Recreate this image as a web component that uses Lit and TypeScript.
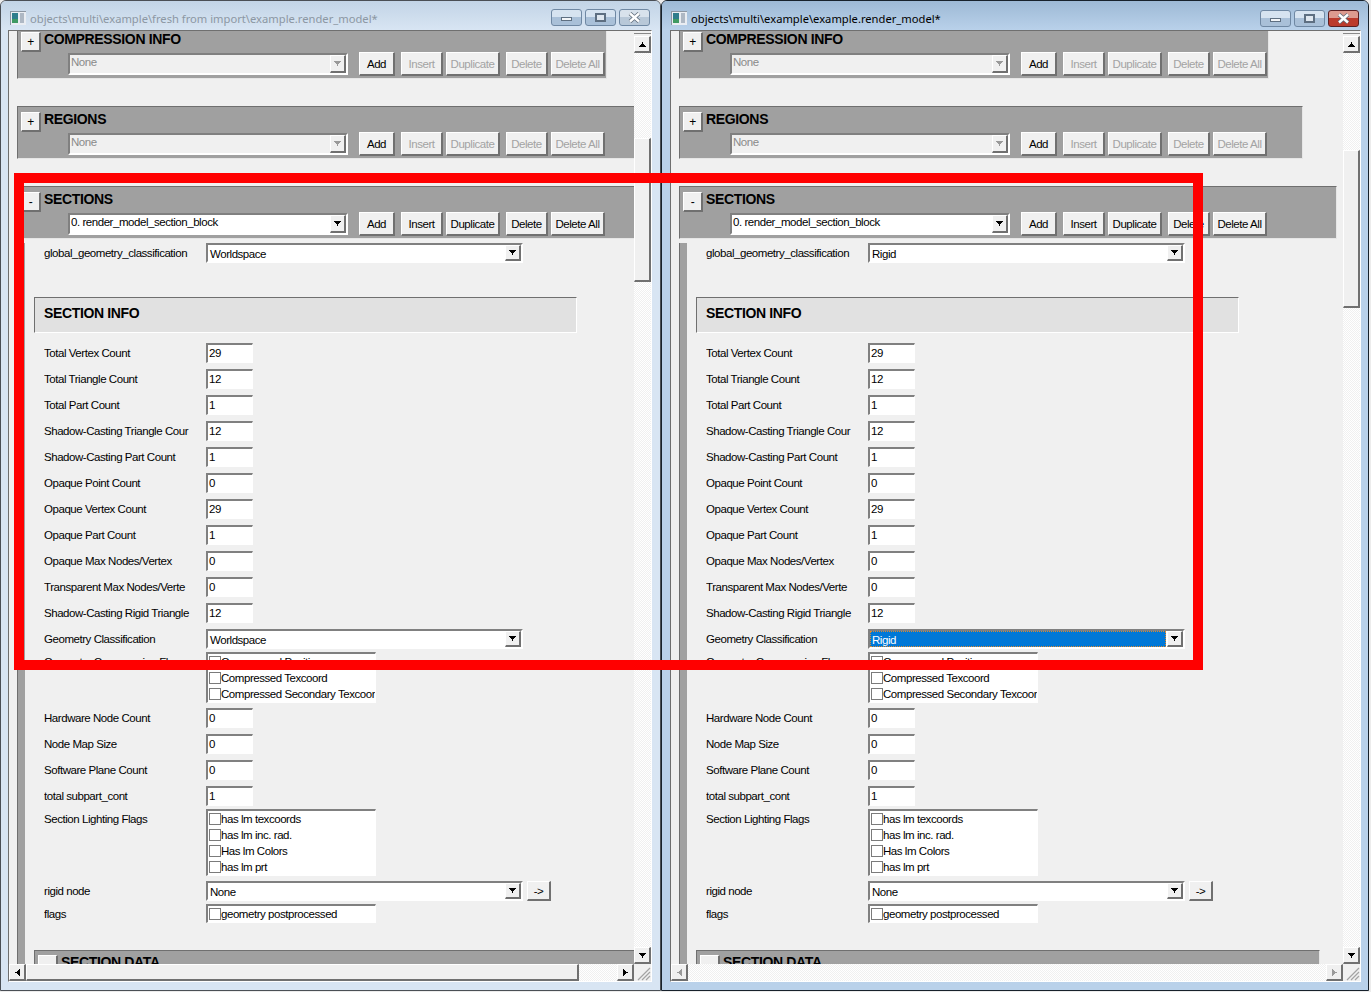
import { LitElement, css, html, svg } from 'lit'
import { customElement, property } from 'lit/decorators.js'
import { classMap } from 'lit/directives/class-map.js'

// pixel arrow, points down, the css classes turn it
const arrow = (dir = 'down', off = false) => html`
   <svg class="arrow ${dir} ${off ? 'off' : ''}" width="7" height="5" viewBox="0 0 7 5" shape-rendering="crispEdges">
      <path d="M0 0h7v1h-1v1h-1v1h-1v2h-1v-2h-1v-1h-1v-1h-1z"></path>
   </svg>`

const grip = svg`
   <path d="M16 4L4 16M16 8L8 16M16 12L12 16" stroke="#a3a3a3" stroke-width="1.2" fill="none"></path>`

const SECTION_ROWS_A: [string, string][] = [
   ['Total Vertex Count', '29'],
   ['Total Triangle Count', '12'],
   ['Total Part Count', '1'],
   ['Shadow-Casting Triangle Cour', '12'],
   ['Shadow-Casting Part Count', '1'],
   ['Opaque Point Count', '0'],
   ['Opaque Vertex Count', '29'],
   ['Opaque Part Count', '1'],
   ['Opaque Max Nodes/Vertex', '0'],
   ['Transparent Max Nodes/Verte', '0'],
   ['Shadow-Casting Rigid Triangle', '12'],
]

const SECTION_ROWS_B: [string, string][] = [
   ['Hardware Node Count', '0'],
   ['Node Map Size', '0'],
   ['Software Plane Count', '0'],
   ['total subpart_cont', '1'],
]

@customElement('tag-window')
export class TagWindow extends LitElement {
   @property({ type: String }) heading = ''
   @property({ type: Boolean }) active = false
   @property({ type: String }) geometry = 'Worldspace'

   panel(name: string, sign: string, value: string, enabled: boolean, width: string) {
      const cls = enabled ? '' : 'off'
      return html`
         <div class="panel ${width}">
            <div class="panel-top">
               <span class="btn sign">${sign}</span>
               <span class="panel-name">${name}</span>
            </div>
            <div class="panel-tools">
               <div class="combo ${cls}">
                  <span class="combo-text">${value}</span>
                  <span class="btn drop">${arrow('down', !enabled)}</span>
               </div>
               <span class="btn tool add">Add</span>
               <span class="btn tool w42 gap6 ${cls}">Insert</span>
               <span class="btn tool w54 gap3 ${cls}">Duplicate</span>
               <span class="btn tool w42 gap6 ${cls}">Delete</span>
               <span class="btn tool w54 gap3 ${cls}">Delete All</span>
            </div>
         </div>`
   }

   select(value: string, picked = false) {
      return html`
         <div class="select">
            <span class=${classMap({ 'select-text': true, picked })}>${value}</span>
            <span class="btn drop">${arrow()}</span>
         </div>`
   }

   flagList(items: string[]) {
      return html`
         <div class="list">
            ${items.map(item => html`<div class="item"><i class="check"></i><span>${item}</span></div>`)}
         </div>`
   }

   inputRow(row: [string, string]) {
      return html`
         <div class="row">
            <span class="label">${row[0]}</span>
            <span class="input">${row[1]}</span>
         </div>`
   }

   render() {
      return html`
         <div class=${classMap({ win: true, active: this.active })}>
            <div class="titlebar">
               <svg class="icon" width="16" height="14" viewBox="0 0 16 14" shape-rendering="crispEdges">
                  <rect x="0" y="0" width="16" height="14" fill="#e9edf2" stroke="#8d97a3"></rect>
                  <rect x="2" y="2" width="6" height="10" fill="#2f7d8c"></rect>
                  <rect x="2" y="8" width="6" height="4" fill="#3f9a63"></rect>
                  <rect x="10" y="2" width="4" height="10" fill="#aeb8c4"></rect>
               </svg>
               <span class="heading">${this.heading}</span>
               <span class="cap min"><i></i></span>
               <span class="cap max"><i></i></span>
               <span class="cap close">
                  <svg width="13" height="11" viewBox="0 0 13 11">
                     <path d="M2 1.5L11 9.5M11 1.5L2 9.5" stroke="#5d6a78" stroke-width="4" fill="none"></path>
                     <path d="M2 1.5L11 9.5M11 1.5L2 9.5" stroke="#fff" stroke-width="2.4" fill="none"></path>
                  </svg>
               </span>
            </div>

            <div class="client">
               <div class="view">
                  <div class="content">
                     ${this.panel('COMPRESSION INFO', '+', 'None', false, 'w-small')}
                     ${this.panel('REGIONS', '+', 'None', false, 'w-mid')}
                     ${this.panel('SECTIONS', '-', '0. render_model_section_block', true, 'w-big flush')}

                     <div class="sec-body">
                        <div class="row first">
                           <span class="label">global_geometry_classification</span>
                           ${this.select(this.geometry)}
                        </div>

                        <div class="info-head">SECTION INFO</div>

                        <div class="rows">
                           ${SECTION_ROWS_A.map(row => this.inputRow(row))}
                           <div class="row">
                              <span class="label">Geometry Classification</span>
                              ${this.select(this.geometry, this.active)}
                           </div>
                           <div class="row m3">
                              <span class="label">Geometry Compression Flags</span>
                              ${this.flagList(['Compressed Position', 'Compressed Texcoord', 'Compressed Secondary Texcoor'])}
                           </div>
                           <div class="m5">${this.inputRow(SECTION_ROWS_B[0])}</div>
                           ${SECTION_ROWS_B.slice(1).map(row => this.inputRow(row))}
                           <div class="row m3">
                              <span class="label">Section Lighting Flags</span>
                              ${this.flagList(['has lm texcoords', 'has lm inc. rad.', 'Has lm Colors', 'has lm prt'])}
                           </div>
                           <div class="row m4">
                              <span class="label">rigid node</span>
                              ${this.select('None')}
                              <span class="btn jump">-&gt;</span>
                           </div>
                           <div class="row m3">
                              <span class="label">flags</span>
                              ${this.flagList(['geometry postprocessed'])}
                           </div>
                        </div>

                        <div class="panel data">
                           <div class="panel-top">
                              <span class="btn sign"></span>
                              <span class="panel-name">SECTION DATA</span>
                           </div>
                        </div>
                     </div>
                  </div>
               </div>

               <div class="vbar">
                  <span class="btn sb">${arrow('up')}</span>
                  <span class="track"><span class="btn thumb"></span></span>
                  <span class="btn sb">${arrow()}</span>
               </div>

               <div class="hbar">
                  <span class="btn sb">${arrow('left', this.active)}</span>
                  <span class="track"><span class="btn hthumb"></span></span>
                  <span class="btn sb">${arrow('right', this.active)}</span>
               </div>

               <svg class="grip" width="17" height="17" viewBox="0 0 17 17">${grip}</svg>
            </div>
         </div>`
   }

   static styles = css`
      :host {
         display: block;
         height: 100%;
      }

      .win {
         --frame: #d8e5f3;
         --title-top: #c2d4e6;
         --edge: #4a4f55;
         --track-w: 553px;
         --thumb-top: 85px;
         --thumb-h: 144px;
         box-sizing: border-box;
         height: 100%;
         display: flex;
         flex-direction: column;
         border: 1px solid var(--edge);
         border-radius: 6px 6px 0 0;
         background: var(--frame);
         font: 11.5px/16px "Liberation Sans", Arial, sans-serif;
         letter-spacing: -0.45px;
         color: #000;
      }

      .win.active {
         --frame: #b9d1ea;
         --title-top: #9db9d5;
         --edge: #17212b;
         --thumb-top: 97px;
         --thumb-h: 158px;
      }

      .titlebar {
         height: 29px;
         flex: none;
         box-sizing: border-box;
         padding: 8px 10px 0 9px;
         display: flex;
         align-items: flex-start;
         background: linear-gradient(var(--title-top), var(--frame));
         border-radius: 5px 5px 0 0;
      }

      .active .titlebar {
         padding: 9px 9px 0 9px;
      }

      .icon {
         margin: 2px 4px 0 0;
      }

      .heading {
         flex: 1;
         font: 11.2px/19px "Noto Sans", sans-serif;
         letter-spacing: 0;
         color: #8c97a3;
         white-space: nowrap;
      }

      .active .heading {
         color: #000;
      }

      .active .icon {
         margin-top: 1px;
      }

      .active .heading {
         line-height: 18px;
      }

      .cap {
         box-sizing: border-box;
         width: 31px;
         height: 17px;
         margin-left: 3px;
         border: 1px solid #6f88a3;
         border-radius: 3px;
         background: linear-gradient(#d6e3f0 0 45%, #a9c0d8 45% 100%);
         display: flex;
         align-items: center;
         justify-content: center;
      }

      .cap.min i {
         width: 11px;
         height: 4px;
         margin-top: 3px;
         box-sizing: border-box;
         background: #f2f5f8;
         border: 1px solid #5e6f81;
      }

      .cap.max i {
         width: 11px;
         height: 9px;
         box-sizing: border-box;
         background: #dfe7ef;
         border: 2px solid #5e6f81;
      }

      .cap.close {
         background: linear-gradient(#d8e2ec 0 45%, #b8c8d8 45% 100%);
      }

      .active .cap.close {
         border-color: #5a1f22;
         background: linear-gradient(#dd9a8f 0 45%, #bb3a2c 45% 100%);
      }

      .client {
         flex: none;
         box-sizing: border-box;
         height: 952px;
         margin: 0 8px 0 7px;
         display: grid;
         grid-template-columns: minmax(0, 1fr) 17px;
         grid-template-rows: minmax(0, 1fr) 17px;
         border-top: 1px solid #6f6f6f;
         border-left: 1px solid #6f6f6f;
         border-right: 1px solid #fff;
         border-bottom: 1px solid #fff;
         background: #f0f0f0;
      }

      .active .client {
         margin: 0 7px 0 8px;
      }

      .view {
         overflow: hidden;
         padding-left: 8px;
      }

      .content {
         width: 700px;
         margin-top: -5px;
      }

      .btn {
         box-sizing: border-box;
         display: flex;
         align-items: center;
         justify-content: center;
         flex: none;
         background: #f0f0f0;
         border-style: solid;
         border-color: #fff #707070 #707070 #fff;
         border-width: 1px 2px 2px 1px;
         white-space: nowrap;
      }

      .panel {
         box-sizing: border-box;
         height: 53px;
         margin-bottom: 27px;
         padding: 5px 0 0 3px;
         background: #a0a0a0;
         border-top: 1px solid #6f6f6f;
         border-left: 1px solid #6f6f6f;
         border-right: 1px solid #e6e6e6;
         border-bottom: 1px solid #e6e6e6;
      }

      .w-small {
         width: 590px;
      }

      .w-mid {
         width: 624px;
      }

      .w-big {
         width: 658px;
      }

      .flush {
         margin-bottom: 0;
      }

      .panel-top {
         display: flex;
         height: 20px;
      }

      .sign {
         width: 20px;
         height: 20px;
         font-size: 12px;
      }

      .panel-name,
      .info-head {
         font: bold 14px/14px "Liberation Sans", Arial, sans-serif;
         letter-spacing: -0.35px;
      }

      .panel-name {
         margin-left: 3px;
      }

      .panel-tools {
         display: flex;
         align-items: flex-start;
         padding-left: 47px;
      }

      .combo {
         box-sizing: border-box;
         width: 280px;
         height: 22px;
         margin-top: 1px;
         display: flex;
         justify-content: space-between;
         background: #fff;
         border-style: solid;
         border-color: #808080 #fff #fff #808080;
         border-width: 2px;
      }

      .combo.off {
         background: #f0f0f0;
         color: #8a8a8a;
      }

      .combo-text {
         padding-left: 1px;
         line-height: 14px;
      }

      .drop {
         width: 16px;
         height: 100%;
      }

      .tool {
         height: 24px;
      }

      .tool.off {
         color: #a3a3a3;
      }

      .add {
         width: 36px;
         margin-left: 11px;
      }

      .w42 {
         width: 42px;
      }

      .w54 {
         width: 54px;
      }

      .gap3 {
         margin-left: 3px;
      }

      .gap6 {
         margin-left: 6px;
      }

      .arrow {
         display: block;
         fill: #000;
      }

      .arrow.off {
         fill: #9a9a9a;
      }

      .arrow.up {
         transform: rotate(180deg);
      }

      .arrow.left {
         transform: rotate(90deg);
      }

      .arrow.right {
         transform: rotate(-90deg);
      }

      .sec-body {
         padding-left: 8px;
         height: 760px;
         background: linear-gradient(to right, #6f6f6f 1px, #a0a0a0 1px, #a0a0a0 8px, transparent 8px);
      }

      .row {
         display: flex;
         align-items: flex-start;
         padding-left: 19px;
         margin-bottom: 6px;
      }

      .row.first {
         margin: 4px 0 34px;
      }

      .label {
         flex: none;
         width: 162px;
         height: 20px;
         line-height: 20px;
         overflow: hidden;
         white-space: nowrap;
      }

      .info-head {
         box-sizing: border-box;
         width: 543px;
         height: 36px;
         margin: 0 0 10px 9px;
         padding-left: 9px;
         line-height: 30px;
         background: #e1e1e1;
         border-top: 1px solid #6f6f6f;
         border-left: 1px solid #6f6f6f;
         border-right: 1px solid #fff;
         border-bottom: 1px solid #fff;
      }

      .input {
         box-sizing: border-box;
         width: 47px;
         height: 20px;
         padding-left: 1px;
         line-height: 17px;
         background: #fff;
         border-style: solid;
         border-color: #808080 #fff #fff #808080;
         border-width: 2px 1px 1px 2px;
      }

      .select {
         box-sizing: border-box;
         width: 317px;
         height: 20px;
         display: flex;
         background: #fff;
         border-style: solid;
         border-color: #808080 #fff #fff #808080;
         border-width: 2px;
      }

      .select-text {
         flex: 1;
         margin-right: 1px;
         padding-left: 2px;
         line-height: 18px;
      }

      .select-text.picked {
         color: #fff;
         background: #0078d7;
         outline: 1px dotted #e08a2c;
         outline-offset: -1px;
      }

      .select .drop {
         width: 16px;
      }

      .jump {
         width: 24px;
         height: 20px;
         margin-left: 4px;
      }

      .list {
         box-sizing: border-box;
         width: 170px;
         overflow: hidden;
         background: #fff;
         border-style: solid;
         border-color: #808080 #fff #fff #808080;
         border-width: 2px 1px 1px 2px;
      }

      .item {
         display: flex;
         align-items: center;
         height: 16px;
         white-space: nowrap;
      }

      .check {
         box-sizing: border-box;
         flex: none;
         width: 12px;
         height: 12px;
         margin-left: 1px;
         border: 1px solid #7b7b7b;
         background: #fff;
      }

      .m3 {
         margin-top: -3px;
      }

      .m4 {
         margin-top: -1px;
      }

      .m5 {
         margin-top: -1px;
      }

      .data {
         width: 624px;
         height: 60px;
         margin: 26px 0 0 9px;
         padding-top: 4px;
      }

      .vbar {
         display: flex;
         flex-direction: column;
         padding-top: 5px;
         box-sizing: border-box;
         box-shadow: inset 0 2px 0 #f0f0f0, inset 0 3px 0 #888;
      }

      .hbar {
         display: flex;
      }

      .sb {
         width: 17px;
         height: 17px;
      }

      .track {
         flex: 1;
         background-color: #f0f0f0;
         background-image: conic-gradient(#fff 25%, #f0f0f0 0 50%, #fff 0 75%, #f0f0f0 0);
         background-size: 2px 2px;
      }

      .vbar .track {
         padding-top: var(--thumb-top);
      }

      .thumb {
         height: var(--thumb-h);
         width: 17px;
      }

      .hthumb {
         height: 17px;
         width: var(--track-w);
      }

      .active .hthumb {
         display: none;
      }

      .grip {
         display: block;
      }
   `
}

@customElement('app-root')
export class AppRoot extends LitElement {
   render() {
      return html`
         <tag-window class="left"
            heading="objects\\multi\\example\\fresh from import\\example.render_model*"
            geometry="Worldspace"></tag-window>
         <tag-window class="right" active
            heading="objects\\multi\\example\\example.render_model*"
            geometry="Rigid"></tag-window>
         <div class="mark"></div>`
   }

   static styles = css`
      :host {
         display: block;
         position: relative;
         width: 1371px;
         height: 992px;
         overflow: hidden;
         background: #ececec;
      }

      tag-window {
         position: absolute;
         top: 0;
         height: 991px;
      }

      .left {
         left: 0;
         width: 661px;
      }

      .right {
         left: 661px;
         width: 708px;
      }

      .mark {
         position: absolute;
         left: 14px;
         top: 173px;
         width: 1189px;
         height: 497px;
         box-sizing: border-box;
         border: 10px solid #ff0000;
      }
   `
}
